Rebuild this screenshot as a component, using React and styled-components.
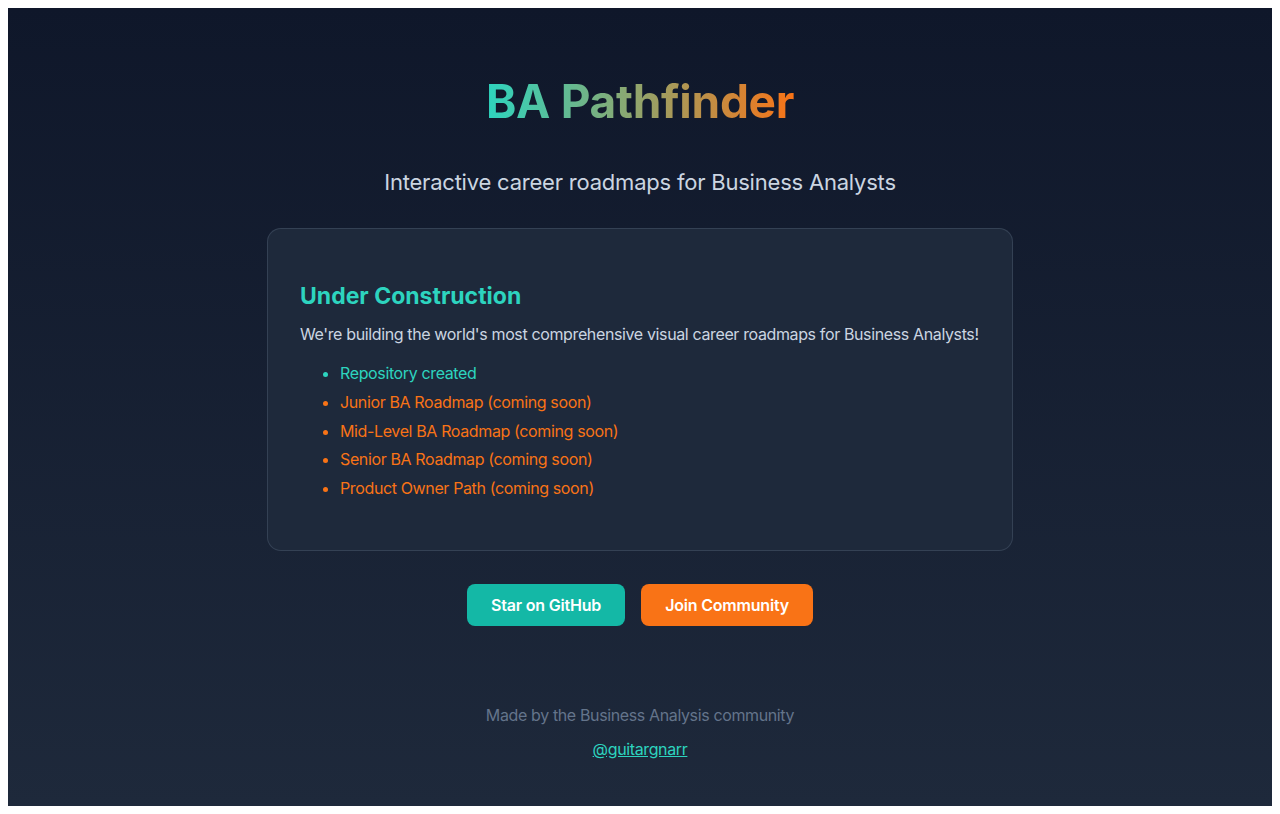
import React from "react";
import styled, { createGlobalStyle } from "styled-components";

const GlobalStyle = createGlobalStyle`
	body {
		margin: 8px;
		font-family: Inter, "Noto Sans", sans-serif;
		background: #ffffff;
	}
`;

const roadmap = [
	{ label: "Repository created", done: true },
	{ label: "Junior BA Roadmap (coming soon)" },
	{ label: "Mid-Level BA Roadmap (coming soon)" },
	{ label: "Senior BA Roadmap (coming soon)" },
	{ label: "Product Owner Path (coming soon)" },
];

function App() {
	return (
		<>
			<GlobalStyle />
			<Page>
				<Title>BA Pathfinder</Title>
				<Subtitle>Interactive career roadmaps for Business Analysts</Subtitle>
				<Card>
					<CardHeading>Under Construction</CardHeading>
					<CardText>
						We're building the world's most comprehensive visual career roadmaps for
						Business Analysts!
					</CardText>
					<List>
						{roadmap.map((item) => (
							<Item key={item.label} $done={item.done}>
								{item.label}
							</Item>
						))}
					</List>
				</Card>
				<Actions>
					<ActionBtn $variant="teal">Star on GitHub</ActionBtn>
					<ActionBtn $variant="orange">Join Community</ActionBtn>
				</Actions>
				<Footer>
					<FooterText>Made by the Business Analysis community</FooterText>
					<FooterLink href="#">@guitargnarr</FooterLink>
				</Footer>
			</Page>
		</>
	);
}

const Page = styled.div`
	display: flex;
	flex-direction: column;
	align-items: center;
	padding: 66px 20px 45px;
	background: linear-gradient(180deg, #0f172a 0%, #1e293b 100%);
	color: #cbd5e1;
	text-align: center;
	letter-spacing: -0.37px;
`;

const Title = styled.h1`
	margin: 0 0 38px;
	font-size: 46px;
	line-height: 54px;
	font-weight: 700;
	letter-spacing: -0.3px;
	background: linear-gradient(90deg, #2dd4bf 0%, #f97316 100%);
	-webkit-background-clip: text;
	background-clip: text;
	color: transparent;
`;

const Subtitle = styled.p`
	margin: 0 0 29px;
	font-size: 22px;
	line-height: 33px;
	letter-spacing: -0.21px;
	color: #cbd5e1;
`;

const Card = styled.section`
	box-sizing: border-box;
	width: 746px;
	padding: 32px;
	border: 1px solid rgba(71, 85, 105, 0.55);
	border-radius: 14px;
	background-color: #1e293b;
	text-align: left;
`;

const CardHeading = styled.h2`
	margin: 21px 0 11px;
	font-size: 23px;
	line-height: 29px;
	font-weight: 700;
	letter-spacing: 0;
	color: #2dd4bf;
`;

const CardText = styled.p`
	margin: 0;
	font-size: 16px;
	line-height: 24px;
	white-space: nowrap;
	color: #cbd5e1;
`;

const List = styled.ul`
	margin: 13px 0 15px;
	padding-left: 40px;
`;

const Item = styled.li`
	font-size: 16px;
	line-height: 28.8px;
	color: ${(p) => (p.$done ? "#2dd4bf" : "#f97316")};
`;

const Actions = styled.div`
	display: flex;
	gap: 16px;
	margin-top: 33px;
`;

const ActionBtn = styled.button`
	border: none;
	border-radius: 8px;
	padding: 12px 24px;
	font-family: inherit;
	font-size: 16px;
	line-height: 18px;
	font-weight: 600;
	letter-spacing: -0.2px;
	color: #ffffff;
	background-color: ${(p) => (p.$variant === "teal" ? "#14b8a6" : "#f97316")};
	cursor: pointer;

	&:hover {
		opacity: 0.9;
	}
`;

const Footer = styled.footer`
	display: flex;
	flex-direction: column;
	align-items: center;
	gap: 10px;
	margin-top: 77px;
`;

const FooterText = styled.p`
	margin: 0;
	font-size: 16px;
	line-height: 24px;
	color: #64748b;
`;

const FooterLink = styled.a`
	font-size: 16px;
	line-height: 24px;
	color: #2dd4bf;
	text-decoration: underline;
`;

export default App;
